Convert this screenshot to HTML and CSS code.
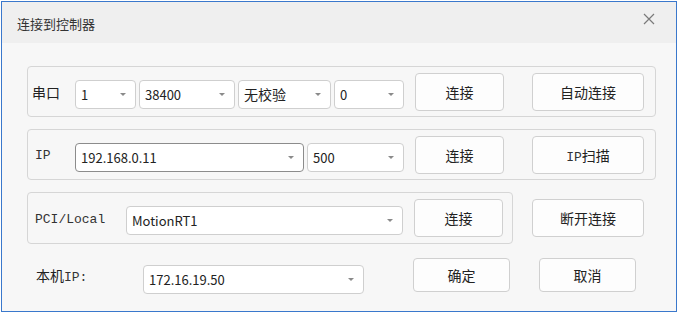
FILE: index.html
```html
<!DOCTYPE html>
<html lang="zh-CN">
<head>
  <meta charset="UTF-8">
  <title>连接到控制器</title>
  <link rel="stylesheet" href="styles.css">
</head>
<body>
  <div class="window">
    <div class="titlebar">
      <span class="title">连接到控制器</span>
      <svg class="close" width="12" height="12" viewBox="0 0 12 12"><path d="M1 1L11 11M11 1L1 11" stroke="#7a7a7a" stroke-width="1.2" fill="none"/></svg>
    </div>
    <div class="content">
      <div class="row">
        <div class="group wide">
          <span class="label serial">串口</span>
          <div class="combo w60"><span>1</span><i class="arrow"></i></div>
          <div class="combo w95"><span>38400</span><i class="arrow"></i></div>
          <div class="combo w92 cn"><span>无校验</span><i class="arrow"></i></div>
          <div class="combo w70"><span>0</span><i class="arrow"></i></div>
          <button class="btn">连接</button>
          <button class="btn big">自动连接</button>
        </div>
      </div>
      <div class="row">
        <div class="group wide">
          <span class="label mono ip">IP</span>
          <div class="combo w228 active"><span>192.168.0.11</span><i class="arrow"></i></div>
          <div class="combo w97"><span>500</span><i class="arrow"></i></div>
          <button class="btn">连接</button>
          <button class="btn big"><span class="mono">IP</span>扫描</button>
        </div>
      </div>
      <div class="row">
        <div class="group narrow">
          <span class="label mono pci">PCI/Local</span>
          <div class="combo w276"><span>MotionRT1</span><i class="arrow"></i></div>
          <button class="btn">连接</button>
        </div>
        <button class="btn big outside">断开连接</button>
      </div>
      <div class="row footer">
        <span class="label local">本机<span class="mono">IP:</span></span>
        <div class="combo w220"><span>172.16.19.50</span><i class="arrow"></i></div>
        <button class="btn small ok">确定</button>
        <button class="btn small cancel">取消</button>
      </div>
    </div>
  </div>
</body>
</html>
```

FILE: styles.css
```css
body {
  margin: 0;
  background: #fff;
  font-family: "Noto Sans CJK SC", "Noto Sans", sans-serif;
  color: #222;
}
.window {
  box-sizing: border-box;
  width: 676px;
  height: 311px;
  margin: 1px 0 0 1px;
  border: 1px solid #3a78cc;
  background: #f7f7f7;
}
.titlebar {
  height: 41px;
  background: #efefef;
  display: flex;
  align-items: center;
  justify-content: space-between;
  padding: 0 21px 0 15px;
}
.title {
  font-size: 13px;
  color: #333;
  margin-top: 2px;
}
.close {
  margin-top: -7px;
}
.content {
  padding: 23px 0 0 25px;
}
.row {
  display: flex;
  align-items: center;
  margin-bottom: 12px;
}
.group {
  box-sizing: border-box;
  height: 51px;
  border: 1px solid #d6d6d6;
  border-radius: 4px;
  display: flex;
  align-items: center;
}
.wide {
  width: 629px;
}
.narrow {
  width: 486px;
  height: 52px;
}
.label {
  box-sizing: border-box;
  font-size: 14px;
  color: #222;
}
.mono {
  font-family: "Liberation Mono", "DejaVu Sans Mono", monospace;
  font-size: 13px;
  color: #333;
}
.serial {
  width: 47px;
  padding-left: 4px;
}
.ip {
  width: 47px;
  padding-left: 7px;
  margin-top: 2px;
}
.pci {
  width: 98px;
  padding-left: 7px;
  margin-top: 2px;
}
.local {
  width: 116px;
  padding-left: 9px;
}
.combo {
  box-sizing: border-box;
  height: 29px;
  margin-top: 5px;
  margin-right: 3px;
  border: 1px solid #cfcfcf;
  border-radius: 4px;
  background: #fff;
  display: flex;
  align-items: center;
  justify-content: space-between;
  padding: 0 9px 0 5px;
  font-size: 13px;
  color: #222;
}
.combo.cn {
  font-size: 14px;
}
.combo.active {
  border-color: #8c8c8c;
}
.arrow {
  width: 0;
  height: 0;
  border-left: 3px solid transparent;
  border-right: 3px solid transparent;
  border-top: 3px solid #8a8a8a;
}
.w60 { width: 61px; }
.w95 { width: 96px; }
.w92 { width: 93px; }
.w70 { width: 70px; }
.w228 { width: 229px; }
.w97 { width: 97px; }
.w276 { width: 277px; }
.w220 { width: 221px; }
.btn {
  box-sizing: border-box;
  height: 38px;
  width: 89px;
  margin-left: 8px;
  border: 1px solid #d0d0d0;
  border-radius: 4px;
  background: #fdfdfd;
  font-family: "Noto Sans CJK SC", "Noto Sans", sans-serif;
  font-size: 14px;
  color: #222;
  padding: 0;
}
.btn.big {
  width: 112px;
  margin-left: 28px;
}
.btn.outside {
  margin-left: 19px;
}
.footer {
  margin-top: 0;
}
.footer .combo {
  margin-top: 9px;
}
.btn.small {
  height: 34px;
  width: 97px;
}
.btn.ok {
  margin-left: 46px;
}
.btn.cancel {
  margin-left: 29px;
}
```
